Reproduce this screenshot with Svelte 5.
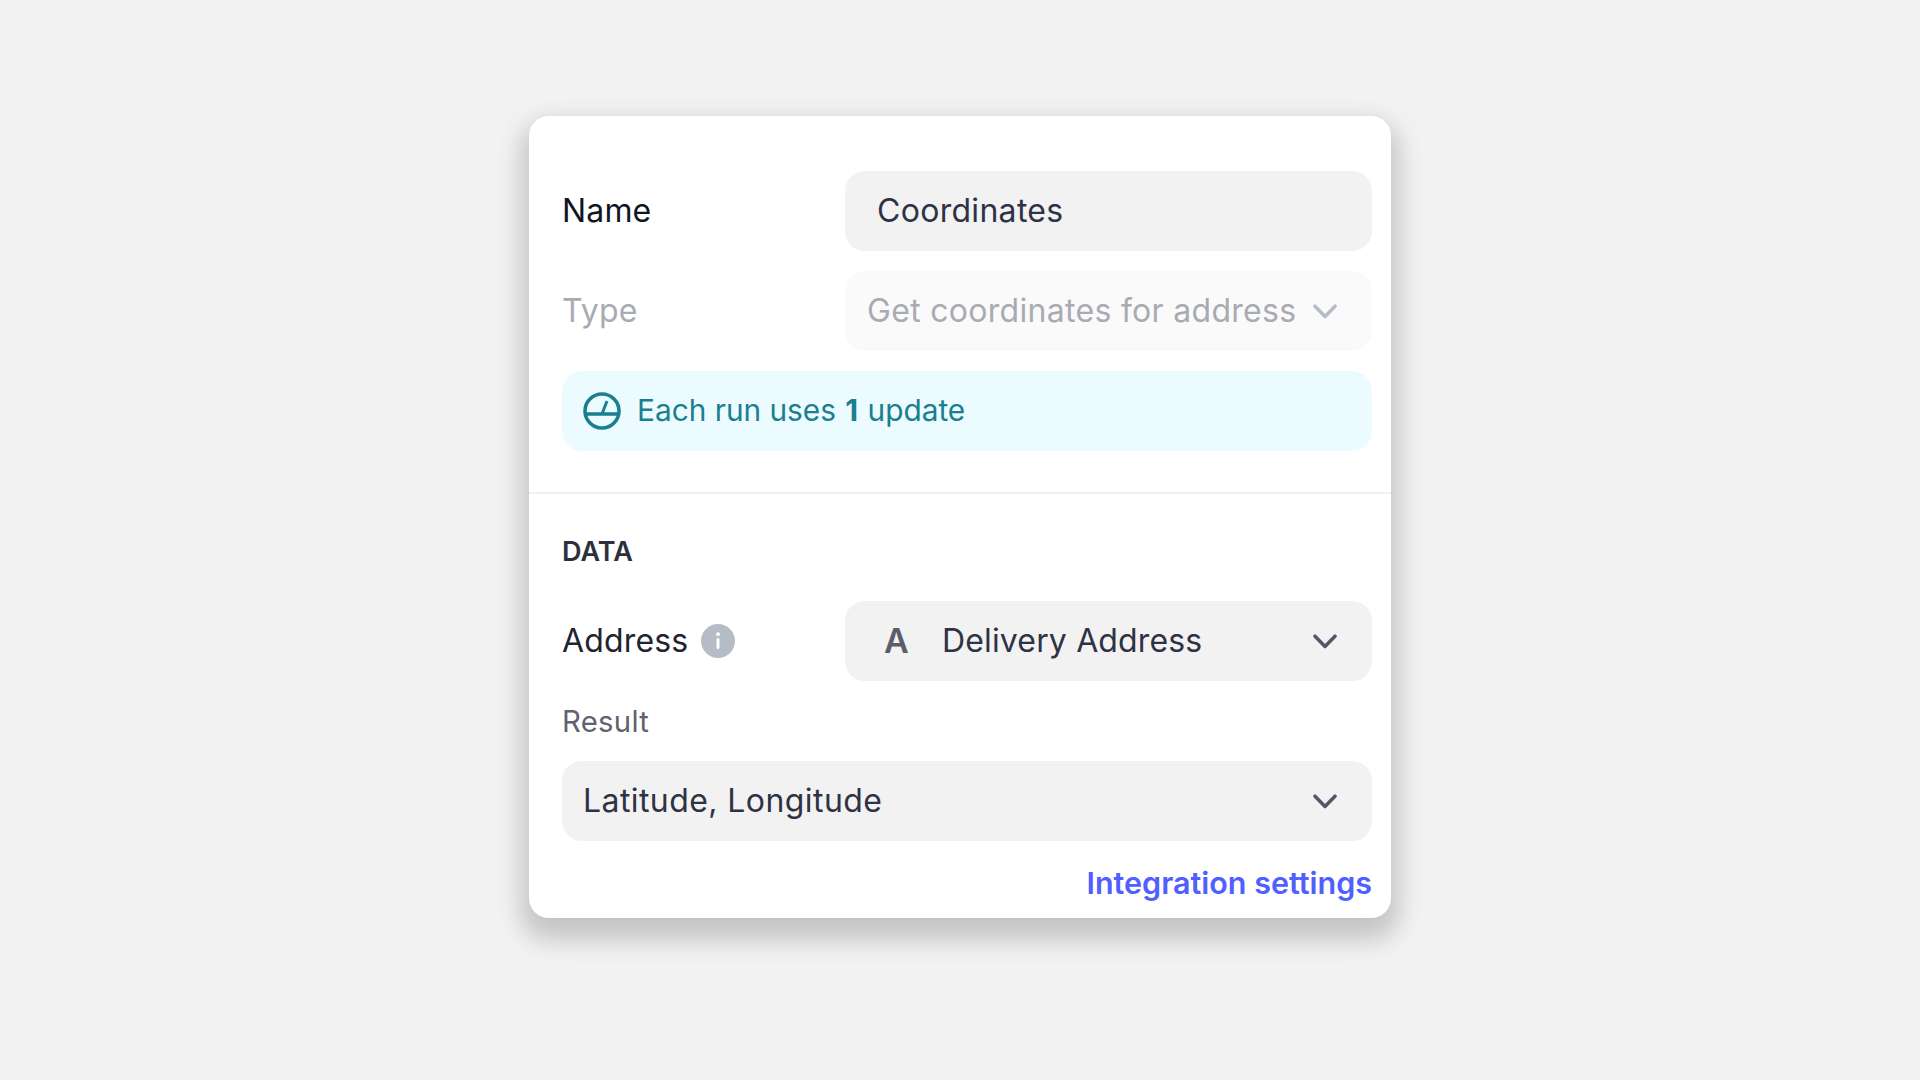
<script>
    let name = 'Coordinates';
</script>

{#snippet chevron(cls)}
    <svg class="chevron {cls}" viewBox="0 0 24 15" width="24" height="15" fill="none" stroke="currentColor" stroke-width="3.5" stroke-linecap="round" stroke-linejoin="round">
        <path d="M2 2.2l10 10.3L22 2.2" />
    </svg>
{/snippet}

<main class="page">
    <section class="card">
        <div class="top">
            <div class="row">
                <span class="label">Name</span>
                <div class="field name-field">{name}</div>
            </div>
            <div class="row">
                <span class="label muted">Type</span>
                <div class="field type-field">
                    <span>Get coordinates for address</span>
                    {@render chevron('chevron-light')}
                </div>
            </div>
            <div class="notice">
                <svg class="gauge" viewBox="0 0 38 38" width="38" height="38" fill="none" stroke="currentColor" stroke-width="3.6">
                    <circle cx="19" cy="19" r="17" />
                    <path d="M2 22h34" />
                    <path d="M19 22l5-13" stroke-width="3" />
                </svg>
                <span>Each run uses <b>1</b> update</span>
            </div>
        </div>

        <div class="bottom">
            <h2>DATA</h2>
            <div class="row">
                <span class="label address">
                    Address
                    <svg class="info" viewBox="0 0 34 34" width="34" height="34">
                        <circle cx="17" cy="17" r="17" fill="#b5bcc5" />
                        <rect x="15.5" y="14" width="3" height="11" rx="1.5" fill="#fff" />
                        <circle cx="17" cy="10.2" r="1.9" fill="#fff" />
                    </svg>
                </span>
                <div class="field address-field">
                    <span class="type-icon">A</span>
                    <span class="grow delivery">Delivery Address</span>
                    {@render chevron('')}
                </div>
            </div>
            <div class="result-label">Result</div>
            <div class="field result-field">
                <span class="grow">Latitude, Longitude</span>
                {@render chevron('')}
            </div>
            <div class="links">
                <span class="link">Integration settings</span>
            </div>
        </div>
    </section>
</main>

<style>
    :global(body) {
        background: #f2f2f2;
        font-family: Inter, "Liberation Sans", sans-serif;
    }

    .page {
        display: flex;
        justify-content: center;
        height: 1080px;
        padding-top: 116px;
        box-sizing: border-box;
    }

    .card {
        width: 862px;
        height: 802px;
        background: #fff;
        border-radius: 20px;
        box-shadow: 0 14px 24px 8px rgba(0, 0, 0, 0.19);
        font-size: 32px;
        letter-spacing: 0.3px;
        color: #2f3244;
    }

    .top {
        padding: 55px 19px 41px 33px;
        display: flex;
        flex-direction: column;
        gap: 20px;
        border-bottom: 2px solid #f0f0f0;
    }

    .bottom {
        padding: 0 19px 0 33px;
    }

    .row {
        display: flex;
        align-items: center;
    }

    .label {
        width: 283px;
        padding-bottom: 2px;
        letter-spacing: 0.15px;
        color: #10151f;
    }

    .muted {
        color: #a9abb3;
    }

    .address {
        display: flex;
        align-items: center;
        gap: 13px;
        color: #1f2430;
    }

    .info {
        margin-top: 2px;
    }

    .field {
        flex: 1;
        height: 80px;
        box-sizing: border-box;
        display: flex;
        align-items: center;
        background: #f2f2f2;
        border-radius: 20px;
    }

    .name-field {
        padding-left: 32px;
        padding-bottom: 2px;
    }

    .type-field {
        background: #fafafa;
        color: #a9abb3;
        padding: 0 35px 0 22px;
        justify-content: space-between;
    }

    .type-field span,
    .grow,
    .type-icon,
    .notice span {
        margin-bottom: 2px;
    }

    .notice {
        height: 80px;
        display: flex;
        align-items: center;
        gap: 16px;
        padding-left: 21px;
        background: #ecfbff;
        border-radius: 20px;
        font-size: 29.8px;
        letter-spacing: 0;
        color: #1a7f8e;
    }

    .notice b {
        font-weight: 700;
        margin: 0 1px;
    }

    .gauge {
        flex: none;
    }

    h2 {
        margin: 41px 0 0;
        font-size: 27px;
        line-height: 33px;
        font-weight: 600;
        letter-spacing: 0;
        color: #2d2f3e;
    }

    .bottom .row {
        margin-top: 33px;
    }

    .address-field {
        padding: 0 35px 0 39px;
    }

    .type-icon {
        width: 26px;
        margin-right: 32px;
        font-size: 34px;
        font-weight: 600;
        color: #5b5d6b;
    }

    .grow {
        flex: 1;
        letter-spacing: 0.42px;
    }

    .delivery {
        letter-spacing: 0.15px;
    }

    .chevron {
        flex: none;
        color: #54566a;
    }

    .chevron-light {
        color: #b5bcc5;
    }

    .result-label {
        margin-top: 21px;
        font-size: 29.3px;
        line-height: 39px;
        color: #5f6270;
    }

    .result-field {
        margin-top: 20px;
        padding: 0 35px 0 21px;
    }

    .links {
        margin-top: 22px;
        display: flex;
        justify-content: flex-end;
    }

    .link {
        color: #4f60ff;
        font-size: 30.5px;
        line-height: 40px;
        font-weight: 600;
        letter-spacing: 0;
    }
</style>
